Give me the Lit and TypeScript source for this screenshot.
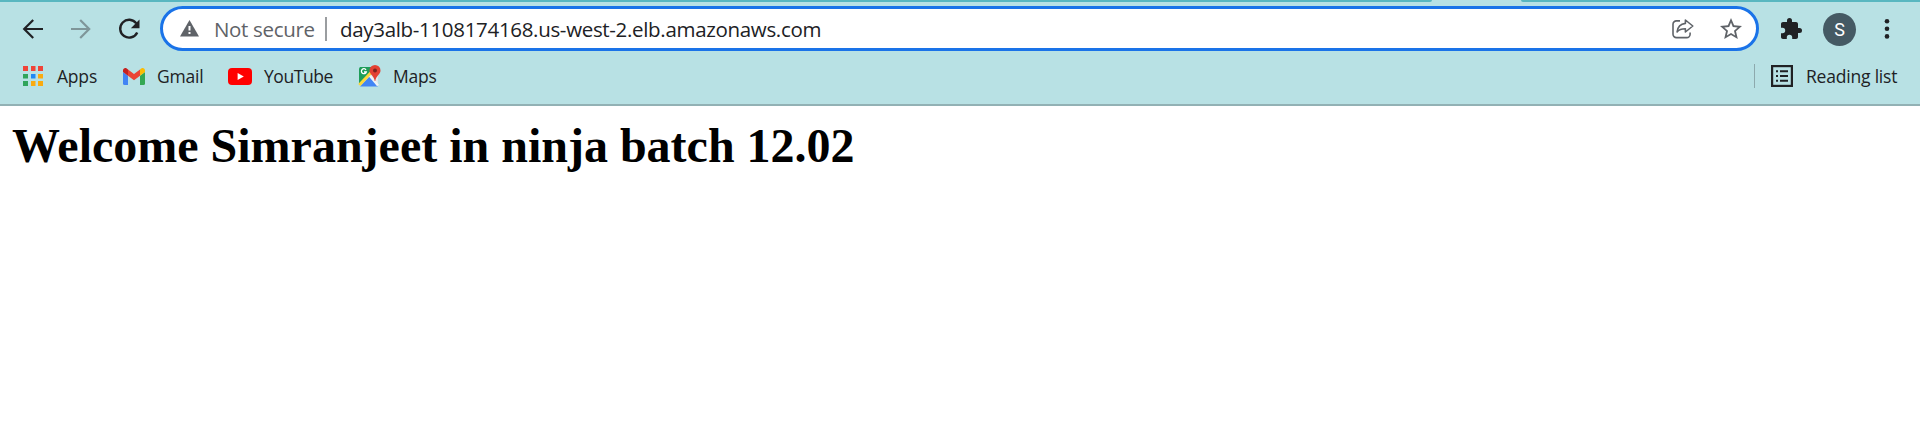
import { LitElement, html, css } from "lit";
import { customElement } from "lit/decorators.js";

@customElement("app-root")
export class AppRoot extends LitElement {
  static styles = css`
    :host { display: block; height: 441px; background: #fff; overflow: hidden; font-family: "Open Sans", "Noto Sans", sans-serif; }
    svg { display: block; flex: none; overflow: visible; }
    .chrome { box-sizing: border-box; height: 106px; background: #b8e1e4; border-bottom: 2px solid #92b1b4; }
    .strip { display: flex; justify-content: space-between; height: 2px; }
    .tabs { background: #59b7c0; height: 2px; }
    .left { width: 1432px; border-bottom-right-radius: 2px; }
    .right { width: 399px; border-bottom-left-radius: 2px; }
    .toolbar { display: flex; align-items: center; height: 53px; }
    .nav { display: flex; gap: 24px; padding-left: 21px; width: 160px; box-sizing: border-box; flex: none; }
    .omni { box-sizing: border-box; width: 1599px; height: 45px; border: 3px solid #1a73e8; border-radius: 23px; background: #fff; display: flex; align-items: center; flex: none; padding-left: 17px; color: #202124; font-size: 20.5px; line-height: 30px; white-space: nowrap; }
    .sec { width: 111px; margin-left: 15px; color: #5f6368; letter-spacing: -0.33px; }
    .bar { width: 2px; height: 24px; background: #9a9da0; margin-right: 13px; }
    .url { flex: 1; letter-spacing: -0.32px; }
    .share { margin-right: 26px; }
    .star { margin-right: 14px; }
    .ext { margin-left: 20px; }
    .avatar { width: 33px; height: 33px; border-radius: 50%; background: #455a64; color: #fff; display: grid; place-items: center; margin-left: 20px; margin-top: 2px; font: 18px/33px Roboto, sans-serif; }
    .dots { margin-left: 28px; margin-top: 1px; }
    .marks { display: flex; align-items: center; height: 42px; padding-left: 23px; font-size: 17.5px; line-height: 24px; color: #202124; white-space: nowrap; }
    .marks span { flex: none; letter-spacing: -0.2px; }
    .apps { margin-left: 14px; width: 66px; }
    .gmail { margin-left: 12px; width: 71px; }
    .marks .yt { margin-left: 12px; width: 94px; letter-spacing: -0.45px; }
    .maps { margin-left: 12px; width: 45px; }
    .space { flex: 1; }
    .div { width: 1px; height: 24px; background: #8da9ad; margin-right: 16px; }
    .read { margin-left: 13px; width: 114px; }
    h1 { margin: 0; padding: 12px 12px 0; font: bold 48px/55px "Liberation Serif", serif; color: #000; white-space: nowrap; }
  `;

  render() {
    return html`
      <div class="chrome">
        <div class="strip"><div class="tabs left"></div><div class="tabs right"></div></div>
        <div class="toolbar">
          <div class="nav">
            <svg width="24" height="24" viewBox="0 0 24 24" fill="none" stroke="#202124" stroke-width="2.2"><path d="M22 12H4M12.2 3L3.2 12l9 9"/></svg>
            <svg width="24" height="24" viewBox="0 0 24 24" fill="none" stroke="#7f9699" stroke-width="2.2"><path d="M2 12H20M11.2 3l9 9-9 9"/></svg>
            <svg width="24" height="24" viewBox="0 0 24 24"><path d="M19.3 6.4A8.9 8.9 0 1 0 20.2 15.4" fill="none" stroke="#202124" stroke-width="2.4"/><path d="M22.5 2.6v8.6h-8.6z" fill="#202124"/></svg>
          </div>
          <div class="omni">
            <svg width="19" height="17" viewBox="0 0 19 17"><path d="M9.5 0L19 16.5H0z" fill="#5f6368"/><path d="M8.5 6h2v4.6h-2zM8.5 12h2v2h-2z" fill="#fff"/></svg>
            <span class="sec">Not secure</span>
            <div class="bar"></div>
            <span class="url">day3alb-1108174168.us-west-2.elb.amazonaws.com</span>
            <svg class="share" width="22" height="20" viewBox="0 0 22 20" fill="none" stroke="#5f6368" stroke-width="1.6"><path d="M8 1.9H4.4a3.4 3.4 0 0 0-3.4 3.4v9.9a3.4 3.4 0 0 0 3.4 3.4h10.3a3.4 3.4 0 0 0 3.4-3.4v-1.7"/><path d="M13.4 1l7.4 6-7.4 6V9.8c-4 0-6.2.6-8.3 3.1.6-5 3.6-8 8.3-8.5z" stroke-linejoin="round"/></svg>
            <svg class="star" width="22" height="21" viewBox="0 0 22 21"><path d="M22 8l-7.9-.7L11 0 7.9 7.3 0 8l6 5.2L4.2 21 11 16.9 17.8 21 16 13.2zM11 14.9l-4.1 2.5 1.1-4.7-3.7-3.2 4.9-.4L11 4.6l1.8 4.5 4.9.4-3.7 3.2 1.1 4.7z" fill="#5f6368"/></svg>
          </div>
          <svg class="ext" width="24" height="24" viewBox="0 0 24 24"><path fill="#202124" d="M20.5 11H19V7c0-1.1-.9-2-2-2h-4V3.5a2.5 2.5 0 0 0-5 0V5H4c-1.1 0-1.99.9-1.99 2v3.8H3.5a2.7 2.7 0 0 1 0 5.4H2V20c0 1.1.9 2 2 2h3.8v-1.5a2.7 2.7 0 0 1 5.4 0V22H17c1.1 0 2-.9 2-2v-4h1.5a2.5 2.5 0 0 0 0-5z"/></svg>
          <div class="avatar">S</div>
          <svg class="dots" width="6" height="20" viewBox="0 0 6 20" fill="#202124"><circle cx="3" cy="2.3" r="2.3"/><circle cx="3" cy="9.8" r="2.3"/><circle cx="3" cy="17.4" r="2.3"/></svg>
        </div>
        <div class="marks">
          <svg width="20" height="20" viewBox="0 0 20 20"><path fill="#f04438" d="M0 0h5v5H0zM8 0h4.5v5H8zM15 0h5v5h-5z"/><path fill="#30a45b" d="M0 8h5v4.5H0zM0 15h5v5H0z"/><path fill="#1e88f5" d="M8 8h4.5v4.5H8z"/><path fill="#faab10" d="M15 8h5v4.5h-5zM8 15h4.5v5H8zM15 15h5v5h-5z"/></svg>
          <span class="apps">Apps</span>
          <svg width="22" height="17" viewBox="0 0 22 17"><path fill="#4285f4" d="M0 4l5 3.7V17H1.5A1.5 1.5 0 0 1 0 15.5z"/><path fill="#34a853" d="M22 4l-5 3.7V17h3.5a1.5 1.5 0 0 0 1.5-1.5z"/><path fill="#ea4335" d="M5 1.4l6 4.5 6-4.5v6.4l-6 4.5-6-4.5z"/><path fill="#c5221f" d="M0 5V2.3C0 .2 2.2-.8 3.7.4L5 1.4v6.4L0 4z"/><path fill="#fbbc04" d="M22 4V2.3c0-2.1-2.2-3.1-3.7-1.9L17 1.4v6.4z"/></svg>
          <span class="gmail">Gmail</span>
          <svg width="24" height="17" viewBox="0 0 24 17"><rect width="24" height="17" rx="4" fill="#f00"/><path d="M9.6 5v7l6.2-3.5z" fill="#fff"/></svg>
          <span class="yt">YouTube</span>
          <svg width="23" height="23" viewBox="0 0 23 23"><path fill="#1e9d59" d="M2 2h15L1 20V3.5z"/><path fill="#4285f4" d="M2 21.5l9.5-10 8.5 10z"/><path fill="#e2e8ec" d="M11.5 11.5l5-5 3.4 5v8z"/><path d="M1.3 20L16 4.5" stroke="#fdd73b" stroke-width="3"/><path d="M12 11l8 9.5" stroke="#eef3f5" stroke-width="2.4"/><path d="M8 4.8A2.5 2.5 0 1 0 8.3 7H6" fill="none" stroke="#fff" stroke-width="1.3"/><path fill="#e34133" d="M17 0a5.5 5.5 0 0 0-5.5 5.5c0 4 4.7 5.2 5.2 10.5h.6c.5-5.3 5.2-6.5 5.2-10.5A5.5 5.5 0 0 0 17 0z"/><circle cx="17" cy="5.6" r="2" fill="#7b241e"/></svg>
          <span class="maps">Maps</span>
          <div class="space"></div>
          <div class="div"></div>
          <svg width="22" height="22" viewBox="0 0 22 22"><rect x="1.1" y="1.1" width="19.8" height="19.8" fill="none" stroke="#202124" stroke-width="2.2"/><path fill="#202124" d="M5 5.3h2v2H5zM9 5.3h8v2H9zM5 10h2v2H5zM9 10h8v2H9zM5 14.7h2v2H5zM9 14.7h8v2H9z"/></svg>
          <span class="read">Reading list</span>
        </div>
      </div>
      <h1>Welcome Simranjeet in ninja batch 12.02</h1>
    `;
  }
}
